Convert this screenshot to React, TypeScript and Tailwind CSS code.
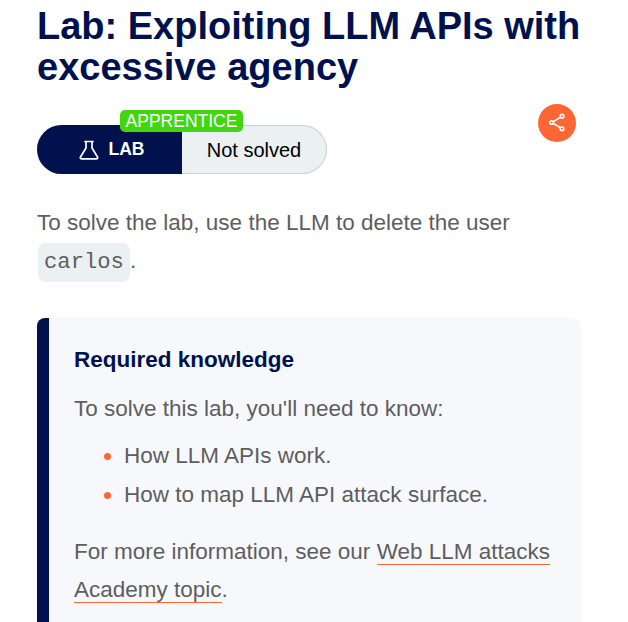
const App = () => {
  return (
    <div className="h-[622px] w-[628px] overflow-hidden bg-white pl-[37px] pr-[47px] font-['Liberation_Sans',Arial,sans-serif] text-[22.5px] leading-[38px] text-[#5e5e5e]">
      <h1 className="pt-[6px] text-[38px] font-bold leading-[41px] text-[#00114d]">
        Lab: Exploiting LLM APIs with excessive agency
      </h1>

      <div className="mt-[16px] flex h-[70px] items-start justify-between">
        <div className="relative mt-[21px] flex h-[49px] w-[290px] rounded-full">
          <span className="absolute left-[83px] top-[-15px] z-10 h-[22px] w-[123px] rounded-[5px] bg-[#41d70f] text-center text-[17.5px] leading-[22px] text-white">
            APPRENTICE
          </span>
          <div className="flex w-[145px] items-center justify-center gap-[10px] rounded-l-full bg-[#00114d] pl-[4px] text-[17.5px] font-bold leading-none text-white">
            <svg width="20" height="20" viewBox="0 0 20 20" fill="none" stroke="white" strokeWidth="1.7" strokeLinejoin="round" strokeLinecap="round">
              <path d="M6 1.5h8M7 1.5v6.5L1.5 17c-.6 1.1 0 1.8 1.2 1.8h14.6c1.2 0 1.8-.7 1.2-1.8L13 8V1.5" />
            </svg>
            LAB
          </div>
          <div className="flex w-[145px] items-center justify-center rounded-r-full border border-l-0 border-[#cbd0d1] bg-[#ebf0f2] text-[20px] leading-none text-black">
            Not solved
          </div>
        </div>
        <div className="mr-[5px] flex size-[38px] items-center justify-center rounded-full bg-[#ff6633]">
          <svg width="20" height="20" viewBox="0 0 20 20" fill="none" stroke="white" strokeWidth="1.6">
            <path d="M6.3 8.6l7.1-4.4M6.3 10.4l7.1 4.4" />
            <circle cx="4.7" cy="9.5" r="1.8" />
            <circle cx="15" cy="3.2" r="1.8" />
            <circle cx="15" cy="15.8" r="1.8" />
          </svg>
        </div>
      </div>

      <p className="mt-[30px]">
        To solve the lab, use the LLM to delete the user{" "}
        <code className="ml-px inline-block h-[39px] rounded-[8px] bg-[#ebf0f2] px-[6px] font-['Liberation_Mono',monospace] text-[22.2px] leading-[39px]">
          carlos
        </code>
        .
      </p>

      <div className="mt-[36px] rounded-[8px] border-l-[12px] border-[#00114d] bg-[#f7f8fc] pb-[60px] pl-[25px] pr-[25px] pt-[23px]">
        <h4 className="text-[22.5px] font-bold leading-[38px] text-[#00114d]">Required knowledge</h4>
        <p className="mt-[11px]">To solve this lab, you'll need to know:</p>
        <ul className="mt-[9px] pl-[50px]">
          <li className="relative">
            <span className="absolute left-[-20px] top-[16px] size-[7px] rounded-full bg-[#ff6633]" />
            How LLM APIs work.
          </li>
          <li className="relative mt-px">
            <span className="absolute left-[-20px] top-[16px] size-[7px] rounded-full bg-[#ff6633]" />
            How to map LLM API attack surface.
          </li>
        </ul>
        <p className="mt-[19px]">
          For more information, see our{" "}
          <a className="border-b border-[#ff6633]">Web LLM attacks Academy topic</a>.
        </p>
      </div>
    </div>
  );
};

export default App;
